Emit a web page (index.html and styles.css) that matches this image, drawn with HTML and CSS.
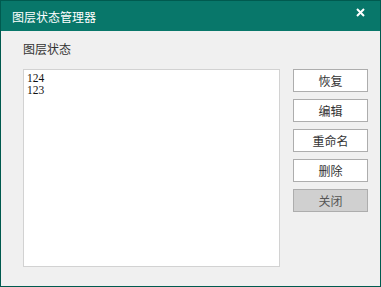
FILE: index.html
```html
<!DOCTYPE html>
<html><head><meta charset="utf-8"><link rel="stylesheet" href="styles.css"></head>
<body>
<div class="win">
  <div class="titlebar">
    <span class="title">图层状态管理器</span>
    <svg class="close" width="9" height="9" viewBox="0 0 9 9"><path d="M1 1L8 8M8 1L1 8" stroke="#fff" stroke-width="2"/></svg>
  </div>
  <div class="content">
    <div class="label">图层状态</div>
    <div class="main">
      <div class="list">
        <div class="item">124</div>
        <div class="item">123</div>
      </div>
      <div class="buttons">
        <div class="btn">恢复</div>
        <div class="btn">编辑</div>
        <div class="btn">重命名</div>
        <div class="btn">删除</div>
        <div class="btn disabled">关闭</div>
      </div>
    </div>
  </div>
</div>
</body></html>
```
FILE: styles.css
```css
html, body { margin: 0; padding: 0; }
body { width: 381px; height: 287px; overflow: hidden; font-family: "Noto Sans CJK SC", sans-serif; }
.win { box-sizing: border-box; width: 381px; height: 287px; border: 1px solid #005a4f; background: #f0f0f0; display: flex; flex-direction: column; }
.titlebar { height: 30px; background: #08776a; display: flex; align-items: center; justify-content: space-between; padding: 0 15px 0 11px; flex-shrink: 0; }
.title { color: #fff; font-size: 12px; line-height: 14px; margin-top: 1px; }
.close { margin-top: -7px; }
.content { padding: 10px 12px 0 22px; }
.label { font-size: 12px; color: #333; line-height: 16px; height: 28px; }
.main { display: flex; gap: 13px; }
.list { box-sizing: border-box; width: 257px; height: 198px; background: #fff; border: 1px solid #d2d2d2; padding: 2px 3px 0; font-family: "Liberation Serif", serif; font-size: 11.5px; color: #111; }
.item { line-height: 12px; height: 12px; }
.buttons { display: flex; flex-direction: column; gap: 7px; }
.btn { box-sizing: border-box; width: 75px; height: 23px; border: 1px solid #adadad; background: #fff; font-size: 12px; color: #333; display: flex; align-items: center; justify-content: center; }
.btn.disabled { background: #d0d0d0; color: #555; }
```
